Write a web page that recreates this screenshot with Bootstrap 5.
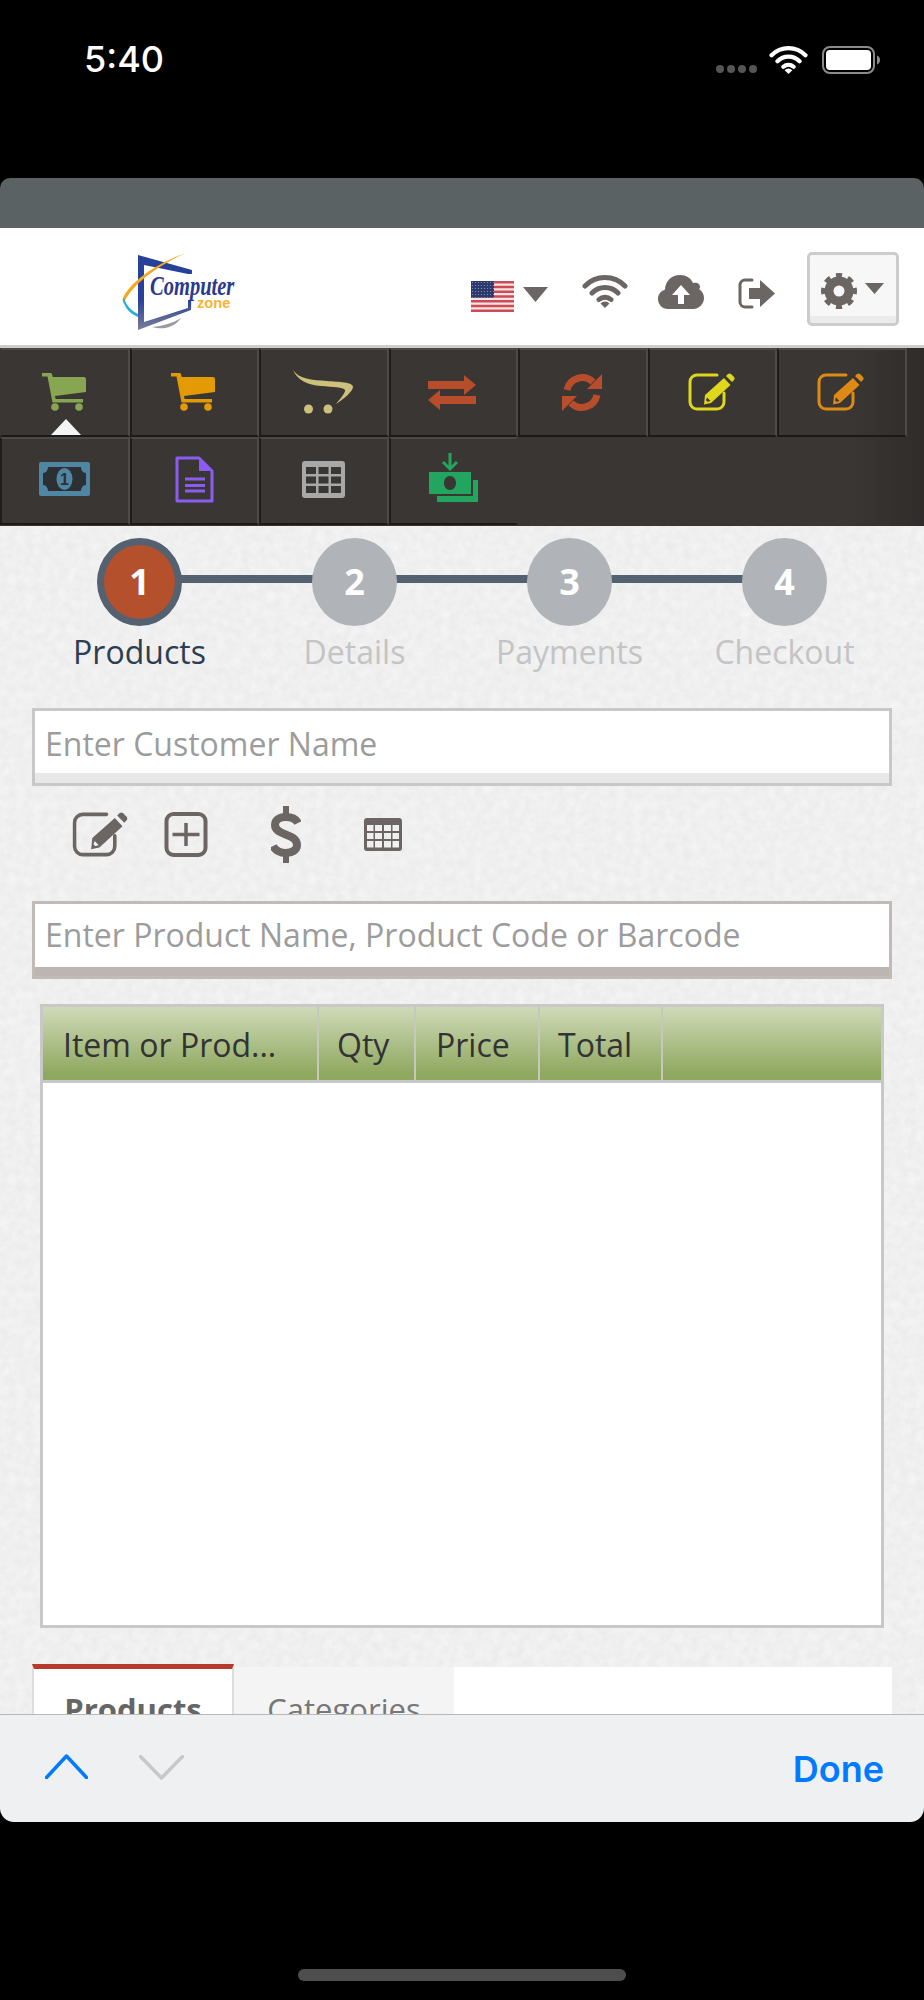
<!DOCTYPE html>
<html lang="en">
<head>
  <meta charset="UTF-8">
  <title>Computer Zone POS</title>
  <link href="https://cdn.jsdelivr.net/npm/bootstrap@5.3.3/dist/css/bootstrap.min.css" rel="stylesheet">
  <style>
    body { background: #000; font-family: "Open Sans", sans-serif; }
    .status-bar { height: 178px; padding: 46px 44px 0 84px; color: #fff; font-family: Inter, sans-serif; }
    .status-time { font-size: 36px; font-weight: 500; line-height: 26px; }
    .status-dots { gap: 3px; margin: 19px 12px 0 0; }
    .status-dots span { width: 8px; height: 8px; border-radius: 50%; background: #555; }
    .status-wifi { margin-right: 14px; }

    .app-top { height: 50px; background: #5b6264; border-radius: 10px 10px 0 0; }
    .app-header { height: 120px; padding-top: 24px; background: #fff; border-bottom: 3px solid #cdcdcd; color: #6b6663; }
    .app-logo { margin-left: 122px; }
    .flag-wrap { margin-top: 29px; }
    .caret-flag { margin: 35px 34px 0 9px; }
    .icon-wifi { margin: 23px 30px 0 0; }
    .icon-cloud { margin: 23px 34px 0 0; }
    .icon-out { margin: 26px 32px 0 0; }
    .gear-btn { width: 92px; height: 74px; margin-right: 25px; padding: 3px 0 0 11px; gap: 8px; background: #f7f7f7; border: 3px solid #ccc; border-radius: 5px; box-shadow: inset 0 -7px 0 #ebebeb; color: #6b6663; }
    .gear-btn:hover { background: #f7f7f7; border-color: #ccc; }

    .tool-bar { height: 178px; background: linear-gradient(90deg, #3a3633 0, #3a3633 92%, #2f2c29 100%); }
    .tool-row { height: 88.5px; }
    .tool-cell { width: 129.5px; height: 88.5px; position: relative; border-top: 2px solid #4c4a48; border-right: 2px solid #4d4b49; border-bottom: 2px solid #1c1917; border-left: 2px solid #1f1c1a; }
    .tool-row:first-child .tool-cell { padding-right: 2px; }
    .tool-row:first-child .tool-cell:first-child { border-left-color: transparent; }
    .tool-row:last-child .tool-cell { padding-bottom: 3px; }
    .tool-row:last-child .tool-cell:last-child { border-right-color: transparent; padding-bottom: 7px; }
    .tool-pointer { position: absolute; left: 49px; bottom: 0; width: 0; height: 0; border-left: 15px solid transparent; border-right: 15px solid transparent; border-bottom: 16px solid #f4f4f4; }
    .c-green { color: #88a552; } .c-orange { color: #e39a05; } .c-tan { color: #cdbf7c; }
    .c-red { color: #b84d2b; } .c-yellow { color: #dfd61d; } .c-amber { color: #df8a14; }
    .c-purple { color: #8b5cf0; } .c-grey { color: #a8a8a8; } .c-cash { color: #22a55f; }

    .work-area { height: 1188px; padding: 12px 32px 0; background-color: #f6f6f6; background-image: url("data:image/svg+xml,%3Csvg xmlns='http://www.w3.org/2000/svg' width='300' height='300'%3E%3Cfilter id='n'%3E%3CfeTurbulence type='fractalNoise' baseFrequency='.12' numOctaves='3'/%3E%3CfeColorMatrix values='0 0 0 0 0 0 0 0 0 0 0 0 0 0 0 0 0 0 .05 0'/%3E%3C/filter%3E%3Crect width='300' height='300' filter='url(%23n)'/%3E%3C/svg%3E"); overflow: hidden; }
    .step-item { flex: 1 1 0; position: relative; text-align: center; }
    .step-item:not(:last-child)::after { content: ""; position: absolute; left: 50%; top: 37px; width: 100%; height: 8px; background: #536170; }
    .step-dot { position: relative; z-index: 1; width: 85px; height: 88px; margin: 0 auto; border-radius: 50%; background: #b0b4b8; color: #fff; font-size: 36px; font-weight: 700; line-height: 88px; }
    .step-on .step-dot { background: #b5502c; border: 7px solid #536170; line-height: 74px; }
    .step-name { margin-top: 5px; font-size: 32px; line-height: 42px; color: #c4c4c4; }
    .step-on .step-name { color: #2c3e50; }

    .field-text { height: 78px; padding: 0 10px 8px; font-size: 32px; color: #333; background: #fff; border: 3px solid #c8c8c8; border-radius: 0; box-shadow: inset 0 -10px 0 #e8e8e8; }
    .field-text::placeholder { color: #9c9c9c; }
    .field-product { padding-bottom: 12px; border-color: #c2bab6; box-shadow: inset 0 -9px 0 #bdb5b1; }
    .customer-field { margin-top: 35px; }
    .action-row { height: 57px; margin: 20px 0 38px; padding-left: 40px; color: #6b6663; }
    .act-edit { margin-right: 36px; }
    .act-plus { margin-right: 63px; }
    .act-dollar { margin-right: 63px; }

    .order-box { height: 624px; margin: 25px 8px 0; background: #fff; border: 3px solid #c8c8c8; }
    .order-table { table-layout: fixed; }
    .order-table thead th { height: 74px; padding: 4px 0 0 20px; background: linear-gradient(#cfdab9, #8fa85f 92%); border: 0; border-right: 2px solid #c4c9bb; border-bottom: 3px solid #c8c8c8; font-size: 32px; font-weight: 400; color: #333; vertical-align: middle; box-shadow: none; white-space: nowrap; }
    .order-table thead th:last-child { border-right: 0; }
    .order-table thead th.col-qty, .order-table thead th.col-total { padding-left: 18px; }
    .col-item { width: 275px; } .col-qty { width: 97px; } .col-price { width: 124px; } .col-total { width: 123px; }

    .tab-strip { margin-top: 36px; background: linear-gradient(transparent 3px, #fff 3px); border: 0; }
    .tab-strip .nav-link { height: 76px; padding: 24px 0 0; border: 0; border-radius: 0; font-size: 31px; line-height: 42px; text-align: center; }
    .tab-strip .tab-on { width: 202px; padding-top: 19px; background: #fff; border-top: 5px solid #b83a2c; border-left: 2px solid #ddd; border-right: 2px solid #ddd; font-weight: 700; color: #666; }
    .tab-strip .tab-off { width: 220px; margin-top: 3px; padding-top: 21px; background: #f4f4f4; color: #777; }

    .key-bar { height: 108px; padding: 0 40px 0 45px; background: #eff0f2; border-top: 1px solid #b8b8b8; border-radius: 0 0 14px 14px; }
    .key-prev { margin-bottom: 4px; }
    .key-next { margin: 0 0 2px 51px; }
    .key-done { margin-left: auto; padding: 0; border: 0; font-family: Inter, sans-serif; font-size: 36px; font-weight: 600; color: #007aff; }
    .home-zone { height: 178px; padding-top: 147px; }
    .home-pill { width: 328px; height: 12px; margin: 0 auto; border-radius: 6px; background: #4d4d4d; }
  </style>
</head>
<body>
  <svg width="0" height="0" class="d-block">
    <defs>
      <symbol id="i-cart" viewBox="0 0 44 38"><path fill="currentColor" d="M0 0h8.500a1.500 1.500 0 0 1 1.500 1.200L10.800 4H42a2 2 0 0 1 2 2v13l-31 4 .6 3H41v3.500H10.500L5.500 3.500H0z"/><circle fill="currentColor" cx="13" cy="34" r="3.800"/><circle fill="currentColor" cx="37" cy="34" r="3.800"/></symbol>
      <symbol id="i-swoosh" viewBox="0 0 60 44"><path fill="currentColor" d="M0 0C6 9 19 10 34 11c12 1 26 1 26 6 0 4-9 12-17 17 4-5 10-12 9-14-2-3-12-3-24-4C15 15 4 10 0 0z"/><circle fill="currentColor" cx="15.500" cy="39" r="4.500"/><circle fill="currentColor" cx="35" cy="39" r="4.500"/></symbol>
      <symbol id="i-swap" viewBox="0 0 48 35"><path fill="currentColor" d="M0 6h36V0l12 10-12 10v-6H0zM48 29H12v6L0 25l12-10v6h36z"/></symbol>
      <symbol id="i-sync" viewBox="0 0 40 41"><path fill="none" stroke="currentColor" stroke-width="7" d="M5 18A15.500 15.500 0 0 1 31 10M35 23A15.500 15.500 0 0 1 9 31"/><path fill="currentColor" d="M40 2v15H25zM0 39V24h15z"/></symbol>
      <symbol id="i-edit" viewBox="0 0 47 38"><path fill="none" stroke="currentColor" stroke-width="3" stroke-linecap="round" d="M29 2H9a7 7 0 0 0-7 7v20a7 7 0 0 0 7 7h20a7 7 0 0 0 7-7v-9"/><path fill="currentColor" fill-rule="evenodd" d="M17 22L36 5l6.500 7L23 30l-7 1.500zM19 24.500l3.500 3.500-3 .8-1.500-1.500z"/><path fill="currentColor" d="M38 3l2-2q1.500-1 3 0l3 3q1.200 1.500 0 3l-2 2z"/></symbol>
      <symbol id="i-bill" viewBox="0 0 51 34"><rect width="51" height="34" rx="2" fill="#4f86a3"/><path fill="#2d3033" d="M9 5h33c0 3 2 6 5 6v12c-3 0-5 3-5 6H9c0-3-2-6-5-6V11c3 0 5-3 5-6z"/><ellipse cx="25.500" cy="17" rx="8" ry="11" fill="#4f86a3"/><text x="25.500" y="23" text-anchor="middle" font-family="Liberation Sans" font-weight="700" font-size="16" fill="#2d3033">1</text></symbol>
      <symbol id="i-doc" viewBox="0 0 39 47"><path fill="none" stroke="currentColor" stroke-width="3" stroke-linejoin="round" d="M2 2h22l13 13v30H2z"/><path fill="currentColor" d="M24 2l13 13H24z"/><path fill="none" stroke="currentColor" stroke-width="3" d="M10 23h20M10 29.500h20M10 35h20"/></symbol>
      <symbol id="i-grid3" viewBox="0 0 43 37"><path fill="currentColor" fill-rule="evenodd" d="M3 0h37a3 3 0 0 1 3 3v31a3 3 0 0 1-3 3H3a3 3 0 0 1-3-3V3a3 3 0 0 1 3-3zM4 6v7h10V6zM16.500 6v7h10V6zM29 6v7h10V6zM4 15.500v7h10v-7zM16.500 15.500v7h10v-7zM29 15.500v7h10v-7zM4 25v7h10v-7zM16.500 25v7h10v-7zM29 25v7h10v-7z"/></symbol>
      <symbol id="i-grid4" viewBox="0 0 38 33"><path fill="currentColor" fill-rule="evenodd" d="M3 0h32a3 3 0 0 1 3 3v27a3 3 0 0 1-3 3H3a3 3 0 0 1-3-3V3a3 3 0 0 1 3-3zM3 7v6h6.500V7zM11 7v6h7V7zM20 7v6h7V7zM28.500 7v6H35V7zM3 15v6h6.500v-6zM11 15v6h7v-6zM20 15v6h7v-6zM28.500 15v6H35v-6zM3 23v6.500h6.500V23zM11 23v6.500h7V23zM20 23v6.500h7V23zM28.500 23v6.500H35V23z"/></symbol>
      <symbol id="i-cash" viewBox="0 0 49 49"><path fill="none" stroke="currentColor" stroke-width="3" d="M21 0v15M14 9l7 7 7-7"/><path fill="currentColor" fill-rule="evenodd" d="M0 19h42v22H0zM21 23c-3.500 0-6 3-6 7s2.500 7 6 7 6-3 6-7-2.500-7-6-7z"/><path fill="currentColor" d="M44 27h5v22H8v-6h36z"/></symbol>
      <symbol id="i-wifi" viewBox="0 0 46 33"><path fill="none" stroke="currentColor" stroke-width="5" stroke-linecap="round" d="M3 11A28 28 0 0 1 43 11M10 18A18 18 0 0 1 36 18M17 24.500A9 9 0 0 1 29 24.500"/><path fill="currentColor" d="M23 33l-4.500-4.500a6 6 0 0 1 9 0z"/></symbol>
    </defs>
  </svg>

  <div class="status-bar d-flex align-items-start">
    <div class="status-time">5:40</div>
    <div class="status-dots d-flex ms-auto"><span></span><span></span><span></span><span></span></div>
    <svg class="status-wifi" width="39" height="28" aria-hidden="true"><use href="#i-wifi"/></svg>
    <svg width="58" height="28" viewBox="0 0 58 28" aria-hidden="true"><rect x="1" y="1" width="51" height="26" rx="7" fill="none" stroke="#8a8a8a" stroke-width="2"/><rect x="4" y="4" width="45" height="20" rx="4" fill="#fff"/><path d="M55 9.500c2 .5 3 2.500 3 4.500s-1 4-3 4.500z" fill="#8a8a8a"/></svg>
  </div>

  <div class="app-top"></div>

  <header class="app-header d-flex align-items-start">
    <svg class="app-logo" width="115" height="79" viewBox="0 0 115 79" aria-label="Computer zone logo">
      <defs><linearGradient id="frameFade" x1="0" y1="0" x2="0" y2="1"><stop offset=".6" stop-color="#27409a"/><stop offset="1" stop-color="#7c7f98"/></linearGradient></defs>
      <path fill="url(#frameFade)" fill-rule="evenodd" d="M16 3L70 18 69 58 16 78zM22 13V70L66 56V22z"/>
      <path fill="#f4a81d" d="M64 1C40 9 10 27 1 46c-1 2 0 4 1 6C6 36 34 14 64 1z"/>
      <path fill="#29abe2" d="M1 48c2 9 8 14 15 17v-3C10 59 5 55 2 46z"/>
      <path fill="#9a9a9a" d="M30 75c10 3 22 1 29-9-8 5-18 8-29 9z"/>
      <rect x="27" y="22" width="86" height="26" fill="#fff"/>
      <text transform="translate(28 43) scale(.76 1)" font-family="Liberation Serif" font-style="italic" font-weight="700" font-size="27" fill="#2b3990">Computer</text>
      <text transform="translate(75 56) scale(1.05 1)" font-family="Liberation Sans" font-weight="700" font-size="14" fill="#f9b233">zone</text>
    </svg>

    <div class="flag-wrap ms-auto">
      <svg class="d-block" width="43" height="31" viewBox="0 0 43 31" aria-label="English">
        <defs><pattern id="stars" width="3" height="3" patternUnits="userSpaceOnUse"><rect width="3" height="3" fill="#2b3a6e"/><circle cx="1.500" cy="1.500" r=".6" fill="#8d95b5"/></pattern></defs>
        <rect width="43" height="31" fill="#f3e6e6"/>
        <path fill="#cf4a55" d="M0 0h43v2.400H0zM0 4.800h43v2.400H0zM0 9.500h43v2.400H0zM0 14.300h43v2.400H0zM0 19.100h43v2.400H0zM0 23.800h43v2.400H0zM0 28.600h43V31H0z"/>
        <rect width="23" height="16.700" fill="url(#stars)"/>
      </svg>
    </div>
    <svg class="caret-flag" width="25" height="15" viewBox="0 0 25 15" aria-hidden="true"><path fill="#6b6663" d="M0 0h25L12.500 15z"/></svg>
    <svg class="icon-wifi" width="46" height="33" aria-hidden="true"><use href="#i-wifi"/></svg>
    <svg class="icon-cloud" width="46" height="34" viewBox="0 0 46 34" aria-hidden="true"><path fill="currentColor" fill-rule="evenodd" d="M10 34C4 34 0 29 0 24c0-5 3-8 7-9.500C7 6 14 0 22 0c6 0 11 3 13 8 3-1 7 0 7 4 0 1 0 1-1 2 3 2 5 5 5 9 0 6-5 11-11 11zM23 10l-9 10h6v9h6v-9h6z"/></svg>
    <svg class="icon-out" width="37" height="31" viewBox="0 0 37 31" aria-hidden="true"><path fill="none" stroke="currentColor" stroke-width="3" stroke-linecap="round" d="M14 2H7a5 5 0 0 0-5 5v17a5 5 0 0 0 5 5h7"/><path fill="currentColor" d="M11 10h11V2l15 13.500L22 29v-8H11z"/></svg>
    <button type="button" class="btn gear-btn d-flex align-items-center">
      <svg width="36" height="36" viewBox="0 0 36 36" aria-hidden="true"><circle cx="18" cy="18" r="10" fill="none" stroke="currentColor" stroke-width="9"/><circle cx="18" cy="18" r="15.500" fill="none" stroke="currentColor" stroke-width="5" pathLength="80" stroke-dasharray="5 5" stroke-dashoffset="2.500"/></svg>
      <svg class="mb-1" width="19" height="11" viewBox="0 0 19 11" aria-hidden="true"><path fill="currentColor" d="M0 0h19L9.500 11z"/></svg>
    </button>
  </header>

  <nav class="tool-bar">
    <div class="tool-row d-flex">
      <div class="tool-cell d-flex align-items-center justify-content-center c-green"><svg width="44" height="38" aria-hidden="true"><use href="#i-cart"/></svg><span class="tool-pointer"></span></div>
      <div class="tool-cell d-flex align-items-center justify-content-center c-orange"><svg width="44" height="38" aria-hidden="true"><use href="#i-cart"/></svg></div>
      <div class="tool-cell d-flex align-items-center justify-content-center c-tan"><svg width="60" height="44" aria-hidden="true"><use href="#i-swoosh"/></svg></div>
      <div class="tool-cell d-flex align-items-center justify-content-center c-red"><svg width="48" height="35" aria-hidden="true"><use href="#i-swap"/></svg></div>
      <div class="tool-cell d-flex align-items-center justify-content-center c-red"><svg width="40" height="41" aria-hidden="true"><use href="#i-sync"/></svg></div>
      <div class="tool-cell d-flex align-items-center justify-content-center c-yellow"><svg width="47" height="38" aria-hidden="true"><use href="#i-edit"/></svg></div>
      <div class="tool-cell d-flex align-items-center justify-content-center c-amber"><svg width="47" height="38" aria-hidden="true"><use href="#i-edit"/></svg></div>
    </div>
    <div class="tool-row d-flex">
      <div class="tool-cell d-flex align-items-center justify-content-center"><svg width="51" height="34" aria-hidden="true"><use href="#i-bill"/></svg></div>
      <div class="tool-cell d-flex align-items-center justify-content-center c-purple"><svg width="39" height="47" aria-hidden="true"><use href="#i-doc"/></svg></div>
      <div class="tool-cell d-flex align-items-center justify-content-center c-grey"><svg width="43" height="37" aria-hidden="true"><use href="#i-grid3"/></svg></div>
      <div class="tool-cell d-flex align-items-center justify-content-center c-cash"><svg width="49" height="49" aria-hidden="true"><use href="#i-cash"/></svg></div>
    </div>
  </nav>

  <main class="work-area">
    <div class="d-flex">
      <div class="step-item step-on"><div class="step-dot">1</div><div class="step-name">Products</div></div>
      <div class="step-item"><div class="step-dot">2</div><div class="step-name">Details</div></div>
      <div class="step-item"><div class="step-dot">3</div><div class="step-name">Payments</div></div>
      <div class="step-item"><div class="step-dot">4</div><div class="step-name">Checkout</div></div>
    </div>

    <div class="customer-field"><input type="text" class="form-control field-text" placeholder="Enter Customer Name"></div>

    <div class="action-row d-flex align-items-center">
      <svg class="act-edit" width="56" height="45" viewBox="0 0 47 38" aria-hidden="true"><use href="#i-edit"/></svg>
      <svg class="act-plus" width="44" height="45" viewBox="0 0 43 45" aria-hidden="true"><rect x="2" y="2" width="39" height="41" rx="7" fill="none" stroke="currentColor" stroke-width="4"/><path fill="none" stroke="currentColor" stroke-width="3.500" d="M21.500 11v23M8 22.500h27"/></svg>
      <svg class="act-dollar" width="30" height="57" viewBox="0 0 30 57" aria-hidden="true"><path fill="none" stroke="currentColor" stroke-width="8" d="M27 17c-2-4-6-6-12-6C8 11 4 14 4 19c0 11 22 8 22 20 0 5-5 8-11 8-6 0-11-3-13-7"/><path fill="currentColor" d="M12 0h6v9h-6zM12 48h6v9h-6z"/></svg>
      <svg width="38" height="33" aria-hidden="true"><use href="#i-grid4"/></svg>
    </div>

    <input type="text" class="form-control field-text field-product" placeholder="Enter Product Name, Product Code or Barcode">

    <div class="order-box">
      <table class="table order-table mb-0">
        <thead>
          <tr>
            <th class="col-item">Item or Prod...</th>
            <th class="col-qty">Qty</th>
            <th class="col-price">Price</th>
            <th class="col-total">Total</th>
            <th></th>
          </tr>
        </thead>
      </table>
    </div>

    <ul class="nav tab-strip">
      <li class="nav-item"><a class="nav-link tab-on" href="#">Products</a></li>
      <li class="nav-item"><a class="nav-link tab-off" href="#">Categories</a></li>
    </ul>
  </main>

  <div class="key-bar d-flex align-items-center">
    <svg class="key-prev" width="43" height="25" viewBox="0 0 43 25" aria-label="Previous"><path fill="none" stroke="#007aff" stroke-width="3.500" stroke-linecap="round" stroke-linejoin="round" d="M1.500 23.500L21.500 2l20 21.500"/></svg>
    <svg class="key-next" width="45" height="25" viewBox="0 0 45 25" aria-label="Next"><path fill="none" stroke="#c8c8c8" stroke-width="3.500" stroke-linecap="round" stroke-linejoin="round" d="M1.500 1.500L22.500 23l21-21.500"/></svg>
    <button type="button" class="btn key-done">Done</button>
  </div>
  <div class="home-zone"><div class="home-pill"></div></div>
</body>
</html>
